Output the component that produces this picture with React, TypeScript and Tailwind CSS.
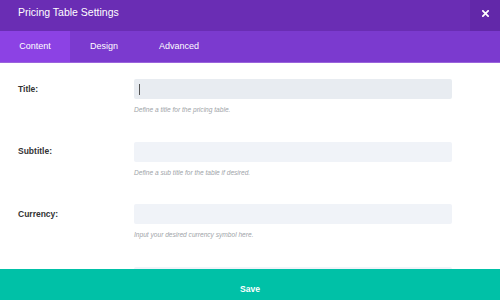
import React from "react";

const rows = [
  { label: "Title:", help: "Define a title for the pricing table.", focused: true },
  { label: "Subtitle:", help: "Define a sub title for the table if desired.", focused: false },
  { label: "Currency:", help: "Input your desired currency symbol here.", focused: false },
  { label: "", help: "", focused: false },
];

export default function App() {
  return (
    <div
      className="w-[500px] h-[300px] overflow-hidden flex flex-col bg-white"
      style={{ fontFamily: '"Liberation Sans", Arial, sans-serif' }}
    >
      <div className="h-[31px] shrink-0 flex bg-[#6a2db4]">
        <div className="flex-1 pl-[18px] pt-[5px] text-white text-[10.5px] leading-[14px]">
          Pricing Table Settings
        </div>
        <div className="w-[30px] h-[31px] bg-[#6228a9] flex items-center justify-center pb-[5px]">
          <svg width="7" height="7" viewBox="0 0 8 8">
            <path d="M1 1 L7 7 M7 1 L1 7" stroke="white" strokeWidth="2" strokeLinecap="square" />
          </svg>
        </div>
      </div>
      <div className="h-[32px] shrink-0 flex bg-[#7b3acf] border-b border-[#9a64dc] text-white text-[9px]">
        <div className="w-[70px] flex items-center justify-center bg-[#8c42e4]">Content</div>
        <div className="w-[68px] flex items-center justify-center">Design</div>
        <div className="w-[82px] flex items-center justify-center">Advanced</div>
      </div>
      <div className="flex-1 overflow-hidden pt-[16px]">
        {rows.map((r, i) => (
          <div key={i} className="flex pl-[18px] h-[62.5px]">
            <div className="w-[116px] h-[20px] flex items-center text-[8.5px] font-bold text-[#333333]">
              {r.label}
            </div>
            <div className="w-[318px] flex flex-col">
              <div
                className={
                  "h-[20px] rounded-[2px] flex items-center pl-[5px] " +
                  (r.focused ? "bg-[#e8ecf1]" : "bg-[#f0f3f8]")
                }
              >
                {r.focused && <span className="w-px h-[11px] bg-[#555]" />}
              </div>
              <div className="mt-[6px] text-[6.6px] italic text-[#a0a4a8] leading-[10px]">
                {r.help}
              </div>
            </div>
          </div>
        ))}
      </div>
      <div className="h-[31px] shrink-0 bg-[#00c1a7] flex items-center justify-center pt-[9px] text-white text-[8.6px] font-bold">
        Save
      </div>
    </div>
  );
}
